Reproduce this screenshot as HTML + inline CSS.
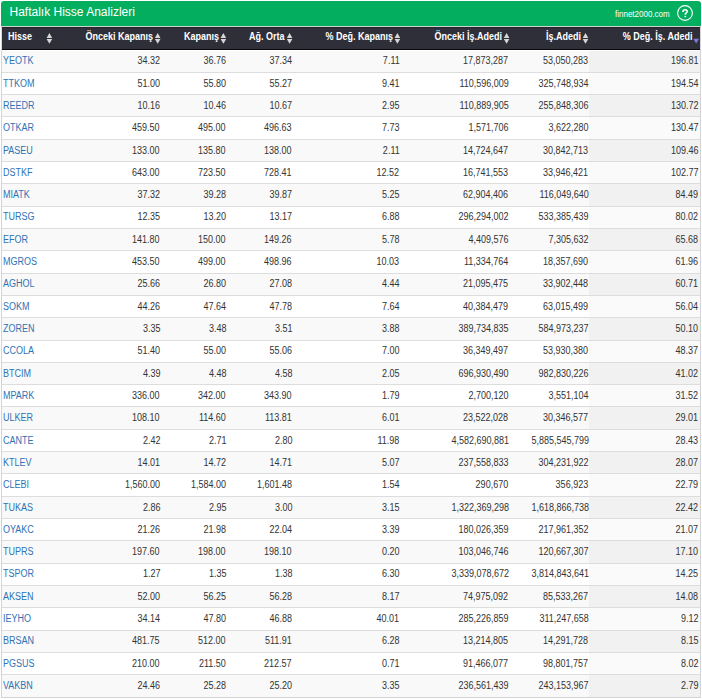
<!DOCTYPE html>
<html><head><meta charset="utf-8">
<style>
html,body{margin:0;padding:0;background:#fff;}
body{width:702px;height:699px;position:relative;overflow:hidden;font-family:"Liberation Sans",sans-serif;}
.a{position:absolute;}
.t{position:absolute;white-space:nowrap;font-size:9px;line-height:10px;}
.sx{font-size:10.0px;transform:scaleX(0.9);transform-origin:0 0;}
.sxr{font-size:10.0px;transform:scaleX(0.9);transform-origin:100% 0;}
.v{color:#333;text-align:right;}
.lnk{color:#2f72b5;}
.h{color:#fff;font-weight:bold;}
.sort{position:absolute;width:0;height:0;border-left:2.8px solid transparent;border-right:2.8px solid transparent;}
</style></head><body>

<div class="a" style="left:1px;top:1px;width:700px;height:25px;background:#03af5e;border-radius:3px 3px 0 0;"></div>
<div class="a" style="left:1px;top:26px;width:700px;height:1px;background:#d2d2d2;"></div>
<div class="t" style="left:9.5px;top:5px;font-size:12px;line-height:14px;color:#fff;">Haftalık Hisse Analizleri</div>
<div class="t" style="left:615px;top:9px;font-size:9px;line-height:10px;color:#fff;transform:scaleX(0.8889);transform-origin:0 0;">finnet2000.com</div>
<svg class="a" style="left:0;top:0" width="702" height="26"><circle cx="685" cy="13" r="7.4" fill="none" stroke="#fff" stroke-width="1.1"/><path d="M682.9,11.9 C682.9,10.3 683.9,9.7 685.1,9.7 C686.3,9.7 687.2,10.5 687.2,11.5 C687.2,12.7 685.5,12.9 685.3,14.1 L685.3,14.8" fill="none" stroke="#fff" stroke-width="1.6"/><rect x="684.45" y="15.9" width="1.7" height="1.3" fill="#fff"/></svg>
<div class="a" style="left:2px;top:27px;width:698px;height:22px;background:#2f2f3a;"></div>
<div class="a" style="left:2px;top:27px;width:698px;height:1px;background:#25252f;"></div>
<div class="a" style="left:2px;top:49px;width:698px;height:1px;background:#0a0a0a;"></div>
<div class="a" style="left:2px;top:50px;width:587px;height:22px;background:#f9f9f9;"></div>
<div class="a" style="left:589px;top:50px;width:111px;height:22px;background:#f1f1f1;"></div>
<div class="a" style="left:2px;top:72px;width:698px;height:1px;background:#dddddd;"></div>
<div class="t lnk sx" style="left:3px;top:56px;">YEOTK</div>
<div class="t v sxr" style="right:542px;top:56px;">34.32</div>
<div class="t v sxr" style="right:476px;top:56px;">36.76</div>
<div class="t v sxr" style="right:410px;top:56px;">37.34</div>
<div class="t v sxr" style="right:302.5px;top:56px;">7.11</div>
<div class="t v sxr" style="right:193.5px;top:56px;">17,873,287</div>
<div class="t v sxr" style="right:113.5px;top:56px;">53,050,283</div>
<div class="t v sxr" style="right:3.5px;top:56px;">196.81</div>
<div class="a" style="left:2px;top:73px;width:587px;height:21px;background:#ffffff;"></div>
<div class="a" style="left:589px;top:73px;width:111px;height:21px;background:#fafafa;"></div>
<div class="a" style="left:2px;top:94px;width:698px;height:1px;background:#dddddd;"></div>
<div class="t lnk sx" style="left:3px;top:79px;">TTKOM</div>
<div class="t v sxr" style="right:542px;top:79px;">51.00</div>
<div class="t v sxr" style="right:476px;top:79px;">55.80</div>
<div class="t v sxr" style="right:410px;top:79px;">55.27</div>
<div class="t v sxr" style="right:302.5px;top:79px;">9.41</div>
<div class="t v sxr" style="right:193.5px;top:79px;">110,596,009</div>
<div class="t v sxr" style="right:113.5px;top:79px;">325,748,934</div>
<div class="t v sxr" style="right:3.5px;top:79px;">194.54</div>
<div class="a" style="left:2px;top:95px;width:587px;height:21px;background:#f9f9f9;"></div>
<div class="a" style="left:589px;top:95px;width:111px;height:21px;background:#f1f1f1;"></div>
<div class="a" style="left:2px;top:116px;width:698px;height:1px;background:#dddddd;"></div>
<div class="t lnk sx" style="left:3px;top:101px;">REEDR</div>
<div class="t v sxr" style="right:542px;top:101px;">10.16</div>
<div class="t v sxr" style="right:476px;top:101px;">10.46</div>
<div class="t v sxr" style="right:410px;top:101px;">10.67</div>
<div class="t v sxr" style="right:302.5px;top:101px;">2.95</div>
<div class="t v sxr" style="right:193.5px;top:101px;">110,889,905</div>
<div class="t v sxr" style="right:113.5px;top:101px;">255,848,306</div>
<div class="t v sxr" style="right:3.5px;top:101px;">130.72</div>
<div class="a" style="left:2px;top:117px;width:587px;height:22px;background:#ffffff;"></div>
<div class="a" style="left:589px;top:117px;width:111px;height:22px;background:#fafafa;"></div>
<div class="a" style="left:2px;top:139px;width:698px;height:1px;background:#dddddd;"></div>
<div class="t lnk sx" style="left:3px;top:123px;">OTKAR</div>
<div class="t v sxr" style="right:542px;top:123px;">459.50</div>
<div class="t v sxr" style="right:476px;top:123px;">495.00</div>
<div class="t v sxr" style="right:410px;top:123px;">496.63</div>
<div class="t v sxr" style="right:302.5px;top:123px;">7.73</div>
<div class="t v sxr" style="right:193.5px;top:123px;">1,571,706</div>
<div class="t v sxr" style="right:113.5px;top:123px;">3,622,280</div>
<div class="t v sxr" style="right:3.5px;top:123px;">130.47</div>
<div class="a" style="left:2px;top:140px;width:587px;height:21px;background:#f9f9f9;"></div>
<div class="a" style="left:589px;top:140px;width:111px;height:21px;background:#f1f1f1;"></div>
<div class="a" style="left:2px;top:161px;width:698px;height:1px;background:#dddddd;"></div>
<div class="t lnk sx" style="left:3px;top:146px;">PASEU</div>
<div class="t v sxr" style="right:542px;top:146px;">133.00</div>
<div class="t v sxr" style="right:476px;top:146px;">135.80</div>
<div class="t v sxr" style="right:410px;top:146px;">138.00</div>
<div class="t v sxr" style="right:302.5px;top:146px;">2.11</div>
<div class="t v sxr" style="right:193.5px;top:146px;">14,724,647</div>
<div class="t v sxr" style="right:113.5px;top:146px;">30,842,713</div>
<div class="t v sxr" style="right:3.5px;top:146px;">109.46</div>
<div class="a" style="left:2px;top:162px;width:587px;height:21px;background:#ffffff;"></div>
<div class="a" style="left:589px;top:162px;width:111px;height:21px;background:#fafafa;"></div>
<div class="a" style="left:2px;top:183px;width:698px;height:1px;background:#dddddd;"></div>
<div class="t lnk sx" style="left:3px;top:168px;">DSTKF</div>
<div class="t v sxr" style="right:542px;top:168px;">643.00</div>
<div class="t v sxr" style="right:476px;top:168px;">723.50</div>
<div class="t v sxr" style="right:410px;top:168px;">728.41</div>
<div class="t v sxr" style="right:302.5px;top:168px;">12.52</div>
<div class="t v sxr" style="right:193.5px;top:168px;">16,741,553</div>
<div class="t v sxr" style="right:113.5px;top:168px;">33,946,421</div>
<div class="t v sxr" style="right:3.5px;top:168px;">102.77</div>
<div class="a" style="left:2px;top:184px;width:587px;height:22px;background:#f9f9f9;"></div>
<div class="a" style="left:589px;top:184px;width:111px;height:22px;background:#f1f1f1;"></div>
<div class="a" style="left:2px;top:206px;width:698px;height:1px;background:#dddddd;"></div>
<div class="t lnk sx" style="left:3px;top:190px;">MIATK</div>
<div class="t v sxr" style="right:542px;top:190px;">37.32</div>
<div class="t v sxr" style="right:476px;top:190px;">39.28</div>
<div class="t v sxr" style="right:410px;top:190px;">39.87</div>
<div class="t v sxr" style="right:302.5px;top:190px;">5.25</div>
<div class="t v sxr" style="right:193.5px;top:190px;">62,904,406</div>
<div class="t v sxr" style="right:113.5px;top:190px;">116,049,640</div>
<div class="t v sxr" style="right:3.5px;top:190px;">84.49</div>
<div class="a" style="left:2px;top:207px;width:587px;height:21px;background:#ffffff;"></div>
<div class="a" style="left:589px;top:207px;width:111px;height:21px;background:#fafafa;"></div>
<div class="a" style="left:2px;top:228px;width:698px;height:1px;background:#dddddd;"></div>
<div class="t lnk sx" style="left:3px;top:212px;">TURSG</div>
<div class="t v sxr" style="right:542px;top:212px;">12.35</div>
<div class="t v sxr" style="right:476px;top:212px;">13.20</div>
<div class="t v sxr" style="right:410px;top:212px;">13.17</div>
<div class="t v sxr" style="right:302.5px;top:212px;">6.88</div>
<div class="t v sxr" style="right:193.5px;top:212px;">296,294,002</div>
<div class="t v sxr" style="right:113.5px;top:212px;">533,385,439</div>
<div class="t v sxr" style="right:3.5px;top:212px;">80.02</div>
<div class="a" style="left:2px;top:229px;width:587px;height:21px;background:#f9f9f9;"></div>
<div class="a" style="left:589px;top:229px;width:111px;height:21px;background:#f1f1f1;"></div>
<div class="a" style="left:2px;top:250px;width:698px;height:1px;background:#dddddd;"></div>
<div class="t lnk sx" style="left:3px;top:235px;">EFOR</div>
<div class="t v sxr" style="right:542px;top:235px;">141.80</div>
<div class="t v sxr" style="right:476px;top:235px;">150.00</div>
<div class="t v sxr" style="right:410px;top:235px;">149.26</div>
<div class="t v sxr" style="right:302.5px;top:235px;">5.78</div>
<div class="t v sxr" style="right:193.5px;top:235px;">4,409,576</div>
<div class="t v sxr" style="right:113.5px;top:235px;">7,305,632</div>
<div class="t v sxr" style="right:3.5px;top:235px;">65.68</div>
<div class="a" style="left:2px;top:251px;width:587px;height:22px;background:#ffffff;"></div>
<div class="a" style="left:589px;top:251px;width:111px;height:22px;background:#fafafa;"></div>
<div class="a" style="left:2px;top:273px;width:698px;height:1px;background:#dddddd;"></div>
<div class="t lnk sx" style="left:3px;top:257px;">MGROS</div>
<div class="t v sxr" style="right:542px;top:257px;">453.50</div>
<div class="t v sxr" style="right:476px;top:257px;">499.00</div>
<div class="t v sxr" style="right:410px;top:257px;">498.96</div>
<div class="t v sxr" style="right:302.5px;top:257px;">10.03</div>
<div class="t v sxr" style="right:193.5px;top:257px;">11,334,764</div>
<div class="t v sxr" style="right:113.5px;top:257px;">18,357,690</div>
<div class="t v sxr" style="right:3.5px;top:257px;">61.96</div>
<div class="a" style="left:2px;top:274px;width:587px;height:21px;background:#f9f9f9;"></div>
<div class="a" style="left:589px;top:274px;width:111px;height:21px;background:#f1f1f1;"></div>
<div class="a" style="left:2px;top:295px;width:698px;height:1px;background:#dddddd;"></div>
<div class="t lnk sx" style="left:3px;top:279px;">AGHOL</div>
<div class="t v sxr" style="right:542px;top:279px;">25.66</div>
<div class="t v sxr" style="right:476px;top:279px;">26.80</div>
<div class="t v sxr" style="right:410px;top:279px;">27.08</div>
<div class="t v sxr" style="right:302.5px;top:279px;">4.44</div>
<div class="t v sxr" style="right:193.5px;top:279px;">21,095,475</div>
<div class="t v sxr" style="right:113.5px;top:279px;">33,902,448</div>
<div class="t v sxr" style="right:3.5px;top:279px;">60.71</div>
<div class="a" style="left:2px;top:296px;width:587px;height:21px;background:#ffffff;"></div>
<div class="a" style="left:589px;top:296px;width:111px;height:21px;background:#fafafa;"></div>
<div class="a" style="left:2px;top:317px;width:698px;height:1px;background:#dddddd;"></div>
<div class="t lnk sx" style="left:3px;top:302px;">SOKM</div>
<div class="t v sxr" style="right:542px;top:302px;">44.26</div>
<div class="t v sxr" style="right:476px;top:302px;">47.64</div>
<div class="t v sxr" style="right:410px;top:302px;">47.78</div>
<div class="t v sxr" style="right:302.5px;top:302px;">7.64</div>
<div class="t v sxr" style="right:193.5px;top:302px;">40,384,479</div>
<div class="t v sxr" style="right:113.5px;top:302px;">63,015,499</div>
<div class="t v sxr" style="right:3.5px;top:302px;">56.04</div>
<div class="a" style="left:2px;top:318px;width:587px;height:22px;background:#f9f9f9;"></div>
<div class="a" style="left:589px;top:318px;width:111px;height:22px;background:#f1f1f1;"></div>
<div class="a" style="left:2px;top:340px;width:698px;height:1px;background:#dddddd;"></div>
<div class="t lnk sx" style="left:3px;top:324px;">ZOREN</div>
<div class="t v sxr" style="right:542px;top:324px;">3.35</div>
<div class="t v sxr" style="right:476px;top:324px;">3.48</div>
<div class="t v sxr" style="right:410px;top:324px;">3.51</div>
<div class="t v sxr" style="right:302.5px;top:324px;">3.88</div>
<div class="t v sxr" style="right:193.5px;top:324px;">389,734,835</div>
<div class="t v sxr" style="right:113.5px;top:324px;">584,973,237</div>
<div class="t v sxr" style="right:3.5px;top:324px;">50.10</div>
<div class="a" style="left:2px;top:341px;width:587px;height:21px;background:#ffffff;"></div>
<div class="a" style="left:589px;top:341px;width:111px;height:21px;background:#fafafa;"></div>
<div class="a" style="left:2px;top:362px;width:698px;height:1px;background:#dddddd;"></div>
<div class="t lnk sx" style="left:3px;top:346px;">CCOLA</div>
<div class="t v sxr" style="right:542px;top:346px;">51.40</div>
<div class="t v sxr" style="right:476px;top:346px;">55.00</div>
<div class="t v sxr" style="right:410px;top:346px;">55.06</div>
<div class="t v sxr" style="right:302.5px;top:346px;">7.00</div>
<div class="t v sxr" style="right:193.5px;top:346px;">36,349,497</div>
<div class="t v sxr" style="right:113.5px;top:346px;">53,930,380</div>
<div class="t v sxr" style="right:3.5px;top:346px;">48.37</div>
<div class="a" style="left:2px;top:363px;width:587px;height:21px;background:#f9f9f9;"></div>
<div class="a" style="left:589px;top:363px;width:111px;height:21px;background:#f1f1f1;"></div>
<div class="a" style="left:2px;top:384px;width:698px;height:1px;background:#dddddd;"></div>
<div class="t lnk sx" style="left:3px;top:369px;">BTCIM</div>
<div class="t v sxr" style="right:542px;top:369px;">4.39</div>
<div class="t v sxr" style="right:476px;top:369px;">4.48</div>
<div class="t v sxr" style="right:410px;top:369px;">4.58</div>
<div class="t v sxr" style="right:302.5px;top:369px;">2.05</div>
<div class="t v sxr" style="right:193.5px;top:369px;">696,930,490</div>
<div class="t v sxr" style="right:113.5px;top:369px;">982,830,226</div>
<div class="t v sxr" style="right:3.5px;top:369px;">41.02</div>
<div class="a" style="left:2px;top:385px;width:587px;height:21px;background:#ffffff;"></div>
<div class="a" style="left:589px;top:385px;width:111px;height:21px;background:#fafafa;"></div>
<div class="a" style="left:2px;top:406px;width:698px;height:1px;background:#dddddd;"></div>
<div class="t lnk sx" style="left:3px;top:391px;">MPARK</div>
<div class="t v sxr" style="right:542px;top:391px;">336.00</div>
<div class="t v sxr" style="right:476px;top:391px;">342.00</div>
<div class="t v sxr" style="right:410px;top:391px;">343.90</div>
<div class="t v sxr" style="right:302.5px;top:391px;">1.79</div>
<div class="t v sxr" style="right:193.5px;top:391px;">2,700,120</div>
<div class="t v sxr" style="right:113.5px;top:391px;">3,551,104</div>
<div class="t v sxr" style="right:3.5px;top:391px;">31.52</div>
<div class="a" style="left:2px;top:407px;width:587px;height:22px;background:#f9f9f9;"></div>
<div class="a" style="left:589px;top:407px;width:111px;height:22px;background:#f1f1f1;"></div>
<div class="a" style="left:2px;top:429px;width:698px;height:1px;background:#dddddd;"></div>
<div class="t lnk sx" style="left:3px;top:413px;">ULKER</div>
<div class="t v sxr" style="right:542px;top:413px;">108.10</div>
<div class="t v sxr" style="right:476px;top:413px;">114.60</div>
<div class="t v sxr" style="right:410px;top:413px;">113.81</div>
<div class="t v sxr" style="right:302.5px;top:413px;">6.01</div>
<div class="t v sxr" style="right:193.5px;top:413px;">23,522,028</div>
<div class="t v sxr" style="right:113.5px;top:413px;">30,346,577</div>
<div class="t v sxr" style="right:3.5px;top:413px;">29.01</div>
<div class="a" style="left:2px;top:430px;width:587px;height:21px;background:#ffffff;"></div>
<div class="a" style="left:589px;top:430px;width:111px;height:21px;background:#fafafa;"></div>
<div class="a" style="left:2px;top:451px;width:698px;height:1px;background:#dddddd;"></div>
<div class="t lnk sx" style="left:3px;top:436px;">CANTE</div>
<div class="t v sxr" style="right:542px;top:436px;">2.42</div>
<div class="t v sxr" style="right:476px;top:436px;">2.71</div>
<div class="t v sxr" style="right:410px;top:436px;">2.80</div>
<div class="t v sxr" style="right:302.5px;top:436px;">11.98</div>
<div class="t v sxr" style="right:193.5px;top:436px;">4,582,690,881</div>
<div class="t v sxr" style="right:113.5px;top:436px;">5,885,545,799</div>
<div class="t v sxr" style="right:3.5px;top:436px;">28.43</div>
<div class="a" style="left:2px;top:452px;width:587px;height:21px;background:#f9f9f9;"></div>
<div class="a" style="left:589px;top:452px;width:111px;height:21px;background:#f1f1f1;"></div>
<div class="a" style="left:2px;top:473px;width:698px;height:1px;background:#dddddd;"></div>
<div class="t lnk sx" style="left:3px;top:458px;">KTLEV</div>
<div class="t v sxr" style="right:542px;top:458px;">14.01</div>
<div class="t v sxr" style="right:476px;top:458px;">14.72</div>
<div class="t v sxr" style="right:410px;top:458px;">14.71</div>
<div class="t v sxr" style="right:302.5px;top:458px;">5.07</div>
<div class="t v sxr" style="right:193.5px;top:458px;">237,558,833</div>
<div class="t v sxr" style="right:113.5px;top:458px;">304,231,922</div>
<div class="t v sxr" style="right:3.5px;top:458px;">28.07</div>
<div class="a" style="left:2px;top:474px;width:587px;height:22px;background:#ffffff;"></div>
<div class="a" style="left:589px;top:474px;width:111px;height:22px;background:#fafafa;"></div>
<div class="a" style="left:2px;top:496px;width:698px;height:1px;background:#dddddd;"></div>
<div class="t lnk sx" style="left:3px;top:480px;">CLEBI</div>
<div class="t v sxr" style="right:542px;top:480px;">1,560.00</div>
<div class="t v sxr" style="right:476px;top:480px;">1,584.00</div>
<div class="t v sxr" style="right:410px;top:480px;">1,601.48</div>
<div class="t v sxr" style="right:302.5px;top:480px;">1.54</div>
<div class="t v sxr" style="right:193.5px;top:480px;">290,670</div>
<div class="t v sxr" style="right:113.5px;top:480px;">356,923</div>
<div class="t v sxr" style="right:3.5px;top:480px;">22.79</div>
<div class="a" style="left:2px;top:497px;width:587px;height:21px;background:#f9f9f9;"></div>
<div class="a" style="left:589px;top:497px;width:111px;height:21px;background:#f1f1f1;"></div>
<div class="a" style="left:2px;top:518px;width:698px;height:1px;background:#dddddd;"></div>
<div class="t lnk sx" style="left:3px;top:503px;">TUKAS</div>
<div class="t v sxr" style="right:542px;top:503px;">2.86</div>
<div class="t v sxr" style="right:476px;top:503px;">2.95</div>
<div class="t v sxr" style="right:410px;top:503px;">3.00</div>
<div class="t v sxr" style="right:302.5px;top:503px;">3.15</div>
<div class="t v sxr" style="right:193.5px;top:503px;">1,322,369,298</div>
<div class="t v sxr" style="right:113.5px;top:503px;">1,618,866,738</div>
<div class="t v sxr" style="right:3.5px;top:503px;">22.42</div>
<div class="a" style="left:2px;top:519px;width:587px;height:21px;background:#ffffff;"></div>
<div class="a" style="left:589px;top:519px;width:111px;height:21px;background:#fafafa;"></div>
<div class="a" style="left:2px;top:540px;width:698px;height:1px;background:#dddddd;"></div>
<div class="t lnk sx" style="left:3px;top:525px;">OYAKC</div>
<div class="t v sxr" style="right:542px;top:525px;">21.26</div>
<div class="t v sxr" style="right:476px;top:525px;">21.98</div>
<div class="t v sxr" style="right:410px;top:525px;">22.04</div>
<div class="t v sxr" style="right:302.5px;top:525px;">3.39</div>
<div class="t v sxr" style="right:193.5px;top:525px;">180,026,359</div>
<div class="t v sxr" style="right:113.5px;top:525px;">217,961,352</div>
<div class="t v sxr" style="right:3.5px;top:525px;">21.07</div>
<div class="a" style="left:2px;top:541px;width:587px;height:22px;background:#f9f9f9;"></div>
<div class="a" style="left:589px;top:541px;width:111px;height:22px;background:#f1f1f1;"></div>
<div class="a" style="left:2px;top:563px;width:698px;height:1px;background:#dddddd;"></div>
<div class="t lnk sx" style="left:3px;top:547px;">TUPRS</div>
<div class="t v sxr" style="right:542px;top:547px;">197.60</div>
<div class="t v sxr" style="right:476px;top:547px;">198.00</div>
<div class="t v sxr" style="right:410px;top:547px;">198.10</div>
<div class="t v sxr" style="right:302.5px;top:547px;">0.20</div>
<div class="t v sxr" style="right:193.5px;top:547px;">103,046,746</div>
<div class="t v sxr" style="right:113.5px;top:547px;">120,667,307</div>
<div class="t v sxr" style="right:3.5px;top:547px;">17.10</div>
<div class="a" style="left:2px;top:564px;width:587px;height:21px;background:#ffffff;"></div>
<div class="a" style="left:589px;top:564px;width:111px;height:21px;background:#fafafa;"></div>
<div class="a" style="left:2px;top:585px;width:698px;height:1px;background:#dddddd;"></div>
<div class="t lnk sx" style="left:3px;top:569px;">TSPOR</div>
<div class="t v sxr" style="right:542px;top:569px;">1.27</div>
<div class="t v sxr" style="right:476px;top:569px;">1.35</div>
<div class="t v sxr" style="right:410px;top:569px;">1.38</div>
<div class="t v sxr" style="right:302.5px;top:569px;">6.30</div>
<div class="t v sxr" style="right:193.5px;top:569px;">3,339,078,672</div>
<div class="t v sxr" style="right:113.5px;top:569px;">3,814,843,641</div>
<div class="t v sxr" style="right:3.5px;top:569px;">14.25</div>
<div class="a" style="left:2px;top:586px;width:587px;height:21px;background:#f9f9f9;"></div>
<div class="a" style="left:589px;top:586px;width:111px;height:21px;background:#f1f1f1;"></div>
<div class="a" style="left:2px;top:607px;width:698px;height:1px;background:#dddddd;"></div>
<div class="t lnk sx" style="left:3px;top:592px;">AKSEN</div>
<div class="t v sxr" style="right:542px;top:592px;">52.00</div>
<div class="t v sxr" style="right:476px;top:592px;">56.25</div>
<div class="t v sxr" style="right:410px;top:592px;">56.28</div>
<div class="t v sxr" style="right:302.5px;top:592px;">8.17</div>
<div class="t v sxr" style="right:193.5px;top:592px;">74,975,092</div>
<div class="t v sxr" style="right:113.5px;top:592px;">85,533,267</div>
<div class="t v sxr" style="right:3.5px;top:592px;">14.08</div>
<div class="a" style="left:2px;top:608px;width:587px;height:22px;background:#ffffff;"></div>
<div class="a" style="left:589px;top:608px;width:111px;height:22px;background:#fafafa;"></div>
<div class="a" style="left:2px;top:630px;width:698px;height:1px;background:#dddddd;"></div>
<div class="t lnk sx" style="left:3px;top:614px;">IEYHO</div>
<div class="t v sxr" style="right:542px;top:614px;">34.14</div>
<div class="t v sxr" style="right:476px;top:614px;">47.80</div>
<div class="t v sxr" style="right:410px;top:614px;">46.88</div>
<div class="t v sxr" style="right:302.5px;top:614px;">40.01</div>
<div class="t v sxr" style="right:193.5px;top:614px;">285,226,859</div>
<div class="t v sxr" style="right:113.5px;top:614px;">311,247,658</div>
<div class="t v sxr" style="right:3.5px;top:614px;">9.12</div>
<div class="a" style="left:2px;top:631px;width:587px;height:21px;background:#f9f9f9;"></div>
<div class="a" style="left:589px;top:631px;width:111px;height:21px;background:#f1f1f1;"></div>
<div class="a" style="left:2px;top:652px;width:698px;height:1px;background:#dddddd;"></div>
<div class="t lnk sx" style="left:3px;top:636px;">BRSAN</div>
<div class="t v sxr" style="right:542px;top:636px;">481.75</div>
<div class="t v sxr" style="right:476px;top:636px;">512.00</div>
<div class="t v sxr" style="right:410px;top:636px;">511.91</div>
<div class="t v sxr" style="right:302.5px;top:636px;">6.28</div>
<div class="t v sxr" style="right:193.5px;top:636px;">13,214,805</div>
<div class="t v sxr" style="right:113.5px;top:636px;">14,291,728</div>
<div class="t v sxr" style="right:3.5px;top:636px;">8.15</div>
<div class="a" style="left:2px;top:653px;width:587px;height:21px;background:#ffffff;"></div>
<div class="a" style="left:589px;top:653px;width:111px;height:21px;background:#fafafa;"></div>
<div class="a" style="left:2px;top:674px;width:698px;height:1px;background:#dddddd;"></div>
<div class="t lnk sx" style="left:3px;top:659px;">PGSUS</div>
<div class="t v sxr" style="right:542px;top:659px;">210.00</div>
<div class="t v sxr" style="right:476px;top:659px;">211.50</div>
<div class="t v sxr" style="right:410px;top:659px;">212.57</div>
<div class="t v sxr" style="right:302.5px;top:659px;">0.71</div>
<div class="t v sxr" style="right:193.5px;top:659px;">91,466,077</div>
<div class="t v sxr" style="right:113.5px;top:659px;">98,801,757</div>
<div class="t v sxr" style="right:3.5px;top:659px;">8.02</div>
<div class="a" style="left:2px;top:675px;width:587px;height:22px;background:#f9f9f9;"></div>
<div class="a" style="left:589px;top:675px;width:111px;height:22px;background:#f1f1f1;"></div>
<div class="t lnk sx" style="left:3px;top:681px;">VAKBN</div>
<div class="t v sxr" style="right:542px;top:681px;">24.46</div>
<div class="t v sxr" style="right:476px;top:681px;">25.28</div>
<div class="t v sxr" style="right:410px;top:681px;">25.20</div>
<div class="t v sxr" style="right:302.5px;top:681px;">3.35</div>
<div class="t v sxr" style="right:193.5px;top:681px;">236,561,439</div>
<div class="t v sxr" style="right:113.5px;top:681px;">243,153,967</div>
<div class="t v sxr" style="right:3.5px;top:681px;">2.79</div>
<div class="a" style="left:1px;top:27px;width:1px;height:671px;background:#d4d4d4;"></div>
<div class="a" style="left:700px;top:27px;width:1px;height:671px;background:#d4d4d4;"></div>
<div class="a" style="left:1px;top:697px;width:700px;height:1px;background:#d4d4d4;"></div>
<div class="a" style="left:2px;top:50px;width:698px;height:1px;background:#ffffff;"></div>
<div class="t h sx" style="left:8px;top:32.0px;">Hisse</div>
<div class="t h sxr" style="right:549.00px;top:32.0px;">Önceki Kapanış</div>
<div class="t h sxr" style="right:483.50px;top:32.0px;">Kapanış</div>
<div class="t h sxr" style="right:417.50px;top:32.0px;">Ağ. Orta</div>
<div class="t h sxr" style="right:309.00px;top:32.0px;">% Değ. Kapanış</div>
<div class="t h sxr" style="right:200.00px;top:32.0px;">Önceki İş.Adedi</div>
<div class="t h sxr" style="right:121.50px;top:32.0px;">İş.Adedi</div>
<div class="t h sxr" style="right:9.80px;top:32.0px;">% Değ. İş. Adedi</div>
<svg class="a" style="left:0;top:0" width="702" height="50"><polygon points="46.6,37.9 52.2,37.9 49.400000000000006,32.9" fill="#d6d6d6"/><polygon points="46.6,39 52.2,39 49.400000000000006,43.7" fill="#d6d6d6"/></svg>
<svg class="a" style="left:0;top:0" width="702" height="50"><polygon points="154.9,37.9 160.5,37.9 157.7,32.9" fill="#d6d6d6"/><polygon points="154.9,39 160.5,39 157.7,43.7" fill="#d6d6d6"/></svg>
<svg class="a" style="left:0;top:0" width="702" height="50"><polygon points="220.6,37.9 226.2,37.9 223.39999999999998,32.9" fill="#d6d6d6"/><polygon points="220.6,39 226.2,39 223.39999999999998,43.7" fill="#d6d6d6"/></svg>
<svg class="a" style="left:0;top:0" width="702" height="50"><polygon points="286.79999999999995,37.9 292.4,37.9 289.59999999999997,32.9" fill="#d6d6d6"/><polygon points="286.79999999999995,39 292.4,39 289.59999999999997,43.7" fill="#d6d6d6"/></svg>
<svg class="a" style="left:0;top:0" width="702" height="50"><polygon points="394.59999999999997,37.9 400.2,37.9 397.4,32.9" fill="#d6d6d6"/><polygon points="394.59999999999997,39 400.2,39 397.4,43.7" fill="#d6d6d6"/></svg>
<svg class="a" style="left:0;top:0" width="702" height="50"><polygon points="503.79999999999995,37.9 509.4,37.9 506.59999999999997,32.9" fill="#d6d6d6"/><polygon points="503.79999999999995,39 509.4,39 506.59999999999997,43.7" fill="#d6d6d6"/></svg>
<svg class="a" style="left:0;top:0" width="702" height="50"><polygon points="582.6999999999999,37.9 588.3,37.9 585.5,32.9" fill="#d6d6d6"/><polygon points="582.6999999999999,39 588.3,39 585.5,43.7" fill="#d6d6d6"/></svg>
<svg class="a" style="left:0;top:0" width="702" height="50"><polygon points="693.3,38.8 699.0,38.8 696.2,43.5" fill="#7b7bdf"/></svg>
</body></html>
